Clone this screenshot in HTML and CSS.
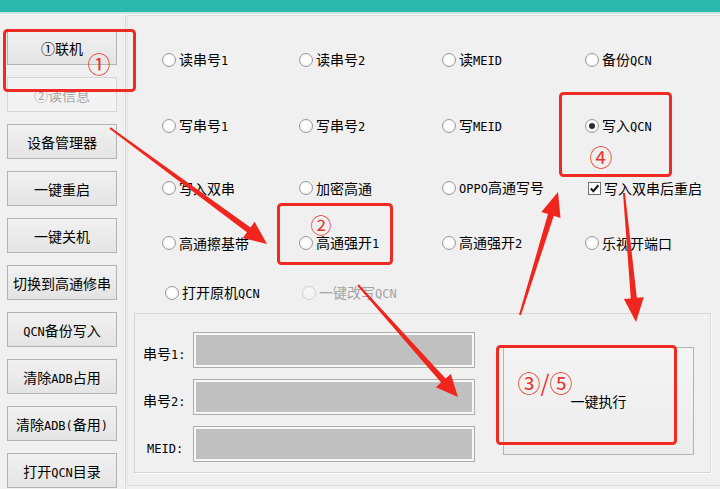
FILE: index.html
```html
<!DOCTYPE html>
<html lang="zh-CN">
<head>
<meta charset="utf-8">
<title>串号工具</title>
<link rel="stylesheet" href="styles.css">
</head>
<body>
<div class="app">
  <div class="titlebar"></div>
  <div class="titleline"></div>
  <div class="main">
    <div class="side">
      <button class="btn">①联机</button>
      <button class="btn disabled">②读信息</button>
      <button class="btn">设备管理器</button>
      <button class="btn">一键重启</button>
      <button class="btn">一键关机</button>
      <button class="btn">切换到高通修串</button>
      <button class="btn"><span class="en">QCN</span>备份写入</button>
      <button class="btn">清除<span class="en">ADB</span>占用</button>
      <button class="btn">清除<span class="en">ADB(</span>备用<span class="en">)</span></button>
      <button class="btn">打开<span class="en">QCN</span>目录</button>
    </div>
    <div class="content">
      <div class="options">
        <div class="opt"><span class="radio"></span><span>读串号<span class="en">1</span></span></div>
        <div class="opt"><span class="radio"></span><span>读串号<span class="en">2</span></span></div>
        <div class="opt"><span class="radio"></span><span>读<span class="en">MEID</span></span></div>
        <div class="opt"><span class="radio"></span><span>备份<span class="en">QCN</span></span></div>

        <div class="opt"><span class="radio"></span><span>写串号<span class="en">1</span></span></div>
        <div class="opt"><span class="radio"></span><span>写串号<span class="en">2</span></span></div>
        <div class="opt"><span class="radio"></span><span>写<span class="en">MEID</span></span></div>
        <div class="opt"><span class="radio checked"></span><span>写入<span class="en">QCN</span></span></div>

        <div class="opt"><span class="radio"></span><span>写入双串</span></div>
        <div class="opt"><span class="radio"></span><span>加密高通</span></div>
        <div class="opt"><span class="radio"></span><span><span class="en">OPPO</span>高通写号</span></div>
        <div class="opt shift"><span class="check"><svg width="11" height="11" viewBox="0 0 11 11"><path d="M1.8 5.6 L4.3 8.2 L9.4 2.2" fill="none" stroke="#1a1a1a" stroke-width="2.1"/></svg></span><span>写入双串后重启</span></div>

        <div class="opt"><span class="radio"></span><span>高通擦基带</span></div>
        <div class="opt"><span class="radio"></span><span>高通强开<span class="en">1</span></span></div>
        <div class="opt"><span class="radio"></span><span>高通强开<span class="en">2</span></span></div>
        <div class="opt"><span class="radio"></span><span>乐视开端口</span></div>

        <div class="opt shift"><span class="radio"></span><span>打开原机<span class="en">QCN</span></span></div>
        <div class="opt shift off"><span class="radio"></span><span>一键改写<span class="en">QCN</span></span></div>
      </div>
      <div class="group">
        <div class="fields">
          <span class="flabel">串号<span class="en">1:</span></span><div class="field"></div>
          <span class="flabel">串号<span class="en">2:</span></span><div class="field"></div>
          <span class="flabel meid"><span class="en">MEID:</span></span><div class="field"></div>
        </div>
        <button class="runbtn">一键执行</button>
      </div>
    </div>
  </div>

  <svg class="marks" width="720" height="489" viewBox="0 0 720 489">
    <g fill="none" stroke="#ee2a22" stroke-width="3">
      <rect x="4.5" y="30.5" width="130" height="60" rx="3"/>
      <rect x="278.5" y="204.5" width="113" height="59" rx="3"/>
      <rect x="560.5" y="93.5" width="110" height="82" rx="3"/>
      <rect x="497.5" y="346.5" width="178" height="97" rx="3"/>
    </g>
    <g fill="#f0261e">
      <polygon points="110.6,127.2 250.5,227.4 254.6,221.7 267,244 242.8,237.9 246.9,232.2 109.4,128.8"/>
      <polygon points="358.7,284.3 445.5,378.6 450.8,373.9 458,397 435.8,387.3 441.1,382.6 357.3,285.7"/>
      <polygon points="521,315.3 553.8,215.8 560.5,217.9 558,192 541.3,211.9 548,214 519,314.7"/>
      <polygon points="625,192.9 636.8,297.8 643.8,297.2 636,322 623.9,299 630.8,298.4 623,193.1"/>
    </g>
    <g class="num" fill="#e8352b">
      <text x="99" y="63">①</text>
      <text x="321" y="224" class="small">②</text>
      <text x="601" y="156">④</text>
      <text x="545" y="382">③/⑤</text>
    </g>
  </svg>
</div>
</body>
</html>
```

FILE: styles.css
```css
body {
  margin: 0;
  background: #f0f0f0;
  font-family: "Noto Sans CJK SC", "Noto Sans", sans-serif;
  font-size: 14px;
  color: #000;
  text-autospace: no-autospace;
}

.app {
  position: relative;
  width: 720px;
  height: 489px;
  overflow: hidden;
  background: #f0f0f0;
}

.titlebar {
  height: 12px;
  background: #2cb9ad;
}

.titleline {
  height: 2px;
  background: #cfe3e3;
  border-bottom: 1px solid #fafafa;
}

.main {
  display: flex;
  height: 474px;
}

.side {
  box-sizing: border-box;
  width: 126px;
  flex: none;
  border-right: 1px solid #d9d9d9;
  padding: 15px 0 0 7px;
  display: flex;
  flex-direction: column;
  gap: 12px;
}

.en {
  font-family: "DejaVu Sans Mono", "Liberation Mono", monospace;
  font-size: 12px;
}

.btn {
  box-sizing: border-box;
  width: 110px;
  height: 35px;
  flex: none;
  padding: 0;
  border: 1px solid #b3b3b3;
  background: linear-gradient(#f1f1f1, #e4e4e4);
  font-family: inherit;
  font-size: 14px;
  color: #000;
  white-space: nowrap;
  text-autospace: no-autospace;
}

.btn.disabled {
  border-color: #d6d6d6;
  background: #f3f3f3;
  color: #a6a6a6;
}

.content {
  box-sizing: border-box;
  flex: 1;
  height: 471px;
  margin-left: 1px;
  border-left: 1px solid #e4e4e4;
  border-top: 1px solid #dedede;
  border-bottom: 1px solid #dcdcdc;
}

.options {
  display: grid;
  grid-template-columns: 137px 143px 143px 1fr;
  grid-template-rows: 66px 62px 55px 50px 20px;
  padding: 34px 0 0 34px;
}

.opt {
  height: 20px;
  display: flex;
  align-items: center;
  white-space: nowrap;
  line-height: 20px;
}

.opt.shift {
  margin-left: 3px;
}

.opt.off {
  color: #a3a3a3;
}

.radio {
  box-sizing: border-box;
  width: 14px;
  height: 14px;
  flex: none;
  margin-right: 3px;
  border-radius: 50%;
  border: 1px solid #9a9a9a;
  background: radial-gradient(circle at 50% 45%, #ffffff 40%, #e6e6e6 100%);
  display: flex;
  align-items: center;
  justify-content: center;
}

.radio.checked::after {
  content: "";
  width: 6px;
  height: 6px;
  border-radius: 50%;
  background: #2b2b2b;
}

.opt.off .radio {
  border-color: #cfcfcf;
  background: #f5f5f5;
}

.check {
  box-sizing: border-box;
  width: 13px;
  height: 13px;
  flex: none;
  margin-right: 3px;
  border: 1px solid #6e6e6e;
  background: #fff;
  display: flex;
  align-items: center;
  justify-content: center;
}

.check svg {
  display: block;
}

.group {
  box-sizing: border-box;
  width: 577px;
  height: 160px;
  margin: 10px 0 0 6px;
  border: 1px solid #d6d6d6;
  box-shadow: 1px 1px 0 #fbfbfb;
  padding: 18px 16px 10px 8px;
  display: flex;
  align-items: flex-start;
}

.fields {
  display: grid;
  grid-template-columns: 50px 282px;
  row-gap: 11px;
}

.flabel {
  height: 36px;
  line-height: 42px;
  white-space: nowrap;
}

.flabel.meid {
  padding-left: 4px;
}

.field {
  box-sizing: border-box;
  height: 36px;
  border: 1px solid #adadad;
  background: #c0c0c0;
  box-shadow: inset 0 0 0 2px #f7f7f7;
}

.runbtn {
  box-sizing: border-box;
  width: 191px;
  height: 108px;
  margin: 15px 0 0 28px;
  padding: 0;
  border: 1px solid #b4b4b4;
  background: linear-gradient(#f4f4f4, #ececec);
  font-family: inherit;
  font-size: 14px;
  color: #000;
}

.marks {
  position: absolute;
  left: 0;
  top: 0;
  pointer-events: none;
}

.num text {
  font-family: "Noto Sans CJK SC", "DejaVu Sans", sans-serif;
  font-size: 23px;
  text-anchor: middle;
  dominant-baseline: central;
}

.num text.small {
  font-size: 21px;
}
```
